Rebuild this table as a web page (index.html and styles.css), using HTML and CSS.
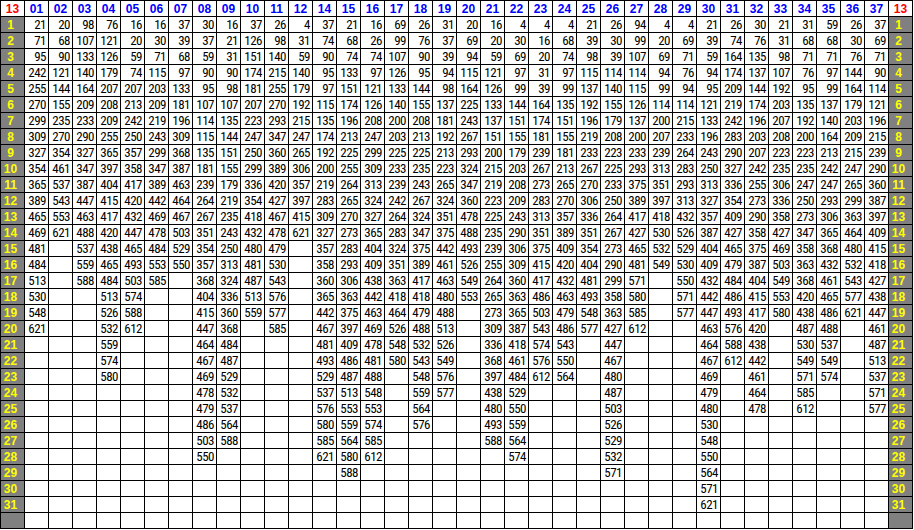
FILE: index.html
```html
<!DOCTYPE html>
<html>
<head>
<meta charset="utf-8">
<title>13</title>
<link rel="stylesheet" href="styles.css">
</head>
<body>
<table class="sheet">
<tr class="hdr"><th class="corner">13</th><th>01</th><th>02</th><th>03</th><th>04</th><th>05</th><th>06</th><th>07</th><th>08</th><th>09</th><th>10</th><th>11</th><th>12</th><th>14</th><th>15</th><th>16</th><th>17</th><th>18</th><th>19</th><th>20</th><th>21</th><th>22</th><th>23</th><th>24</th><th>25</th><th>26</th><th>27</th><th>28</th><th>29</th><th>30</th><th>31</th><th>32</th><th>33</th><th>34</th><th>35</th><th>36</th><th>37</th><th class="corner">13</th></tr>
<tr><th class="rh">1</th><td>21</td><td>20</td><td>98</td><td>76</td><td>16</td><td>16</td><td>37</td><td>30</td><td>16</td><td>37</td><td>26</td><td>4</td><td>37</td><td>21</td><td>16</td><td>69</td><td>26</td><td>31</td><td>20</td><td>16</td><td>4</td><td>4</td><td>4</td><td>21</td><td>26</td><td>94</td><td>4</td><td>4</td><td>21</td><td>26</td><td>30</td><td>21</td><td>31</td><td>59</td><td>26</td><td>37</td><th class="rh">1</th></tr>
<tr><th class="rh">2</th><td>71</td><td>68</td><td>107</td><td>121</td><td>20</td><td>30</td><td>39</td><td>37</td><td>21</td><td>126</td><td>98</td><td>31</td><td>74</td><td>68</td><td>26</td><td>99</td><td>76</td><td>37</td><td>69</td><td>20</td><td>30</td><td>16</td><td>68</td><td>39</td><td>30</td><td>99</td><td>20</td><td>69</td><td>39</td><td>74</td><td>76</td><td>31</td><td>68</td><td>68</td><td>30</td><td>69</td><th class="rh">2</th></tr>
<tr><th class="rh">3</th><td>95</td><td>90</td><td>133</td><td>126</td><td>59</td><td>71</td><td>68</td><td>59</td><td>31</td><td>151</td><td>140</td><td>59</td><td>90</td><td>74</td><td>74</td><td>107</td><td>90</td><td>39</td><td>94</td><td>59</td><td>69</td><td>20</td><td>74</td><td>98</td><td>39</td><td>107</td><td>69</td><td>71</td><td>59</td><td>164</td><td>135</td><td>98</td><td>71</td><td>71</td><td>76</td><td>71</td><th class="rh">3</th></tr>
<tr><th class="rh">4</th><td>242</td><td>121</td><td>140</td><td>179</td><td>74</td><td>115</td><td>97</td><td>90</td><td>90</td><td>174</td><td>215</td><td>140</td><td>95</td><td>133</td><td>97</td><td>126</td><td>95</td><td>94</td><td>115</td><td>121</td><td>97</td><td>31</td><td>97</td><td>115</td><td>114</td><td>114</td><td>94</td><td>76</td><td>94</td><td>174</td><td>137</td><td>107</td><td>76</td><td>97</td><td>144</td><td>90</td><th class="rh">4</th></tr>
<tr><th class="rh">5</th><td>255</td><td>144</td><td>164</td><td>207</td><td>207</td><td>203</td><td>133</td><td>95</td><td>98</td><td>181</td><td>255</td><td>179</td><td>97</td><td>151</td><td>121</td><td>133</td><td>144</td><td>98</td><td>164</td><td>126</td><td>99</td><td>39</td><td>99</td><td>137</td><td>140</td><td>115</td><td>99</td><td>94</td><td>95</td><td>209</td><td>144</td><td>192</td><td>95</td><td>99</td><td>164</td><td>114</td><th class="rh">5</th></tr>
<tr><th class="rh">6</th><td>270</td><td>155</td><td>209</td><td>208</td><td>213</td><td>209</td><td>181</td><td>107</td><td>107</td><td>207</td><td>270</td><td>192</td><td>115</td><td>174</td><td>126</td><td>140</td><td>155</td><td>137</td><td>225</td><td>133</td><td>144</td><td>164</td><td>135</td><td>192</td><td>155</td><td>126</td><td>114</td><td>114</td><td>121</td><td>219</td><td>174</td><td>203</td><td>135</td><td>137</td><td>179</td><td>121</td><th class="rh">6</th></tr>
<tr><th class="rh">7</th><td>299</td><td>235</td><td>233</td><td>209</td><td>242</td><td>219</td><td>196</td><td>114</td><td>135</td><td>223</td><td>293</td><td>215</td><td>135</td><td>196</td><td>208</td><td>200</td><td>208</td><td>181</td><td>243</td><td>137</td><td>151</td><td>174</td><td>151</td><td>196</td><td>179</td><td>137</td><td>200</td><td>215</td><td>133</td><td>242</td><td>196</td><td>207</td><td>192</td><td>140</td><td>203</td><td>196</td><th class="rh">7</th></tr>
<tr><th class="rh">8</th><td>309</td><td>270</td><td>290</td><td>255</td><td>250</td><td>243</td><td>309</td><td>115</td><td>144</td><td>247</td><td>347</td><td>247</td><td>174</td><td>213</td><td>247</td><td>203</td><td>213</td><td>192</td><td>267</td><td>151</td><td>155</td><td>181</td><td>155</td><td>219</td><td>208</td><td>200</td><td>207</td><td>233</td><td>196</td><td>283</td><td>203</td><td>208</td><td>200</td><td>164</td><td>209</td><td>215</td><th class="rh">8</th></tr>
<tr><th class="rh">9</th><td>327</td><td>354</td><td>327</td><td>365</td><td>357</td><td>299</td><td>368</td><td>135</td><td>151</td><td>250</td><td>360</td><td>265</td><td>192</td><td>225</td><td>299</td><td>225</td><td>225</td><td>213</td><td>293</td><td>200</td><td>179</td><td>239</td><td>181</td><td>233</td><td>223</td><td>233</td><td>239</td><td>264</td><td>243</td><td>290</td><td>207</td><td>223</td><td>223</td><td>213</td><td>215</td><td>239</td><th class="rh">9</th></tr>
<tr><th class="rh">10</th><td>354</td><td>461</td><td>347</td><td>397</td><td>358</td><td>347</td><td>387</td><td>181</td><td>155</td><td>299</td><td>389</td><td>306</td><td>200</td><td>255</td><td>309</td><td>233</td><td>235</td><td>223</td><td>324</td><td>215</td><td>203</td><td>267</td><td>213</td><td>267</td><td>225</td><td>293</td><td>313</td><td>283</td><td>250</td><td>327</td><td>242</td><td>235</td><td>235</td><td>242</td><td>247</td><td>290</td><th class="rh">10</th></tr>
<tr><th class="rh">11</th><td>365</td><td>537</td><td>387</td><td>404</td><td>417</td><td>389</td><td>463</td><td>239</td><td>179</td><td>336</td><td>420</td><td>357</td><td>219</td><td>264</td><td>313</td><td>239</td><td>243</td><td>265</td><td>347</td><td>219</td><td>208</td><td>273</td><td>265</td><td>270</td><td>233</td><td>375</td><td>351</td><td>293</td><td>313</td><td>336</td><td>255</td><td>306</td><td>247</td><td>247</td><td>265</td><td>360</td><th class="rh">11</th></tr>
<tr><th class="rh">12</th><td>389</td><td>543</td><td>447</td><td>415</td><td>420</td><td>442</td><td>464</td><td>264</td><td>219</td><td>354</td><td>427</td><td>397</td><td>283</td><td>265</td><td>324</td><td>242</td><td>267</td><td>324</td><td>360</td><td>223</td><td>209</td><td>283</td><td>270</td><td>306</td><td>250</td><td>389</td><td>397</td><td>313</td><td>327</td><td>354</td><td>273</td><td>336</td><td>250</td><td>293</td><td>299</td><td>387</td><th class="rh">12</th></tr>
<tr><th class="rh">13</th><td>465</td><td>553</td><td>463</td><td>417</td><td>432</td><td>469</td><td>467</td><td>267</td><td>235</td><td>418</td><td>467</td><td>415</td><td>309</td><td>270</td><td>327</td><td>264</td><td>324</td><td>351</td><td>478</td><td>225</td><td>243</td><td>313</td><td>357</td><td>336</td><td>264</td><td>417</td><td>418</td><td>432</td><td>357</td><td>409</td><td>290</td><td>358</td><td>273</td><td>306</td><td>363</td><td>397</td><th class="rh">13</th></tr>
<tr><th class="rh">14</th><td>469</td><td>621</td><td>488</td><td>420</td><td>447</td><td>478</td><td>503</td><td>351</td><td>243</td><td>432</td><td>478</td><td>621</td><td>327</td><td>273</td><td>365</td><td>283</td><td>347</td><td>375</td><td>488</td><td>235</td><td>290</td><td>351</td><td>389</td><td>351</td><td>267</td><td>427</td><td>530</td><td>526</td><td>387</td><td>427</td><td>358</td><td>427</td><td>347</td><td>365</td><td>464</td><td>409</td><th class="rh">14</th></tr>
<tr><th class="rh">15</th><td>481</td><td></td><td>537</td><td>438</td><td>465</td><td>484</td><td>529</td><td>354</td><td>250</td><td>480</td><td>479</td><td></td><td>357</td><td>283</td><td>404</td><td>324</td><td>375</td><td>442</td><td>493</td><td>239</td><td>306</td><td>375</td><td>409</td><td>354</td><td>273</td><td>465</td><td>532</td><td>529</td><td>404</td><td>465</td><td>375</td><td>469</td><td>358</td><td>368</td><td>480</td><td>415</td><th class="rh">15</th></tr>
<tr><th class="rh">16</th><td>484</td><td></td><td>559</td><td>465</td><td>493</td><td>553</td><td>550</td><td>357</td><td>313</td><td>481</td><td>530</td><td></td><td>358</td><td>293</td><td>409</td><td>351</td><td>389</td><td>461</td><td>526</td><td>255</td><td>309</td><td>415</td><td>420</td><td>404</td><td>290</td><td>481</td><td>549</td><td>530</td><td>409</td><td>479</td><td>387</td><td>503</td><td>363</td><td>432</td><td>532</td><td>418</td><th class="rh">16</th></tr>
<tr><th class="rh">17</th><td>513</td><td></td><td>588</td><td>484</td><td>503</td><td>585</td><td></td><td>368</td><td>324</td><td>487</td><td>543</td><td></td><td>360</td><td>306</td><td>438</td><td>363</td><td>417</td><td>463</td><td>549</td><td>264</td><td>360</td><td>417</td><td>432</td><td>481</td><td>299</td><td>571</td><td></td><td>550</td><td>432</td><td>484</td><td>404</td><td>549</td><td>368</td><td>461</td><td>543</td><td>427</td><th class="rh">17</th></tr>
<tr><th class="rh">18</th><td>530</td><td></td><td></td><td>513</td><td>574</td><td></td><td></td><td>404</td><td>336</td><td>513</td><td>576</td><td></td><td>365</td><td>363</td><td>442</td><td>418</td><td>418</td><td>480</td><td>553</td><td>265</td><td>363</td><td>486</td><td>463</td><td>493</td><td>358</td><td>580</td><td></td><td>571</td><td>442</td><td>486</td><td>415</td><td>553</td><td>420</td><td>465</td><td>577</td><td>438</td><th class="rh">18</th></tr>
<tr><th class="rh">19</th><td>548</td><td></td><td></td><td>526</td><td>588</td><td></td><td></td><td>415</td><td>360</td><td>559</td><td>577</td><td></td><td>442</td><td>375</td><td>463</td><td>464</td><td>479</td><td>488</td><td></td><td>273</td><td>365</td><td>503</td><td>479</td><td>548</td><td>363</td><td>585</td><td></td><td>577</td><td>447</td><td>493</td><td>417</td><td>580</td><td>438</td><td>486</td><td>621</td><td>447</td><th class="rh">19</th></tr>
<tr><th class="rh">20</th><td>621</td><td></td><td></td><td>532</td><td>612</td><td></td><td></td><td>447</td><td>368</td><td></td><td>585</td><td></td><td>467</td><td>397</td><td>469</td><td>526</td><td>488</td><td>513</td><td></td><td>309</td><td>387</td><td>543</td><td>486</td><td>577</td><td>427</td><td>612</td><td></td><td></td><td>463</td><td>576</td><td>420</td><td></td><td>487</td><td>488</td><td></td><td>461</td><th class="rh">20</th></tr>
<tr><th class="rh">21</th><td></td><td></td><td></td><td>559</td><td></td><td></td><td></td><td>464</td><td>484</td><td></td><td></td><td></td><td>481</td><td>409</td><td>478</td><td>548</td><td>532</td><td>526</td><td></td><td>336</td><td>418</td><td>574</td><td>543</td><td></td><td>447</td><td></td><td></td><td></td><td>464</td><td>588</td><td>438</td><td></td><td>530</td><td>537</td><td></td><td>487</td><th class="rh">21</th></tr>
<tr><th class="rh">22</th><td></td><td></td><td></td><td>574</td><td></td><td></td><td></td><td>467</td><td>487</td><td></td><td></td><td></td><td>493</td><td>486</td><td>481</td><td>580</td><td>543</td><td>549</td><td></td><td>368</td><td>461</td><td>576</td><td>550</td><td></td><td>467</td><td></td><td></td><td></td><td>467</td><td>612</td><td>442</td><td></td><td>549</td><td>549</td><td></td><td>513</td><th class="rh">22</th></tr>
<tr><th class="rh">23</th><td></td><td></td><td></td><td>580</td><td></td><td></td><td></td><td>469</td><td>529</td><td></td><td></td><td></td><td>529</td><td>487</td><td>488</td><td></td><td>548</td><td>576</td><td></td><td>397</td><td>484</td><td>612</td><td>564</td><td></td><td>480</td><td></td><td></td><td></td><td>469</td><td></td><td>461</td><td></td><td>571</td><td>574</td><td></td><td>537</td><th class="rh">23</th></tr>
<tr><th class="rh">24</th><td></td><td></td><td></td><td></td><td></td><td></td><td></td><td>478</td><td>532</td><td></td><td></td><td></td><td>537</td><td>513</td><td>548</td><td></td><td>559</td><td>577</td><td></td><td>438</td><td>529</td><td></td><td></td><td></td><td>487</td><td></td><td></td><td></td><td>479</td><td></td><td>464</td><td></td><td>585</td><td></td><td></td><td>571</td><th class="rh">24</th></tr>
<tr><th class="rh">25</th><td></td><td></td><td></td><td></td><td></td><td></td><td></td><td>479</td><td>537</td><td></td><td></td><td></td><td>576</td><td>553</td><td>553</td><td></td><td>564</td><td></td><td></td><td>480</td><td>550</td><td></td><td></td><td></td><td>503</td><td></td><td></td><td></td><td>480</td><td></td><td>478</td><td></td><td>612</td><td></td><td></td><td>577</td><th class="rh">25</th></tr>
<tr><th class="rh">26</th><td></td><td></td><td></td><td></td><td></td><td></td><td></td><td>486</td><td>564</td><td></td><td></td><td></td><td>580</td><td>559</td><td>574</td><td></td><td>576</td><td></td><td></td><td>493</td><td>559</td><td></td><td></td><td></td><td>526</td><td></td><td></td><td></td><td>530</td><td></td><td></td><td></td><td></td><td></td><td></td><td></td><th class="rh">26</th></tr>
<tr><th class="rh">27</th><td></td><td></td><td></td><td></td><td></td><td></td><td></td><td>503</td><td>588</td><td></td><td></td><td></td><td>585</td><td>564</td><td>585</td><td></td><td></td><td></td><td></td><td>588</td><td>564</td><td></td><td></td><td></td><td>529</td><td></td><td></td><td></td><td>548</td><td></td><td></td><td></td><td></td><td></td><td></td><td></td><th class="rh">27</th></tr>
<tr><th class="rh">28</th><td></td><td></td><td></td><td></td><td></td><td></td><td></td><td>550</td><td></td><td></td><td></td><td></td><td>621</td><td>580</td><td>612</td><td></td><td></td><td></td><td></td><td></td><td>574</td><td></td><td></td><td></td><td>532</td><td></td><td></td><td></td><td>550</td><td></td><td></td><td></td><td></td><td></td><td></td><td></td><th class="rh">28</th></tr>
<tr><th class="rh">29</th><td></td><td></td><td></td><td></td><td></td><td></td><td></td><td></td><td></td><td></td><td></td><td></td><td></td><td>588</td><td></td><td></td><td></td><td></td><td></td><td></td><td></td><td></td><td></td><td></td><td>571</td><td></td><td></td><td></td><td>564</td><td></td><td></td><td></td><td></td><td></td><td></td><td></td><th class="rh">29</th></tr>
<tr><th class="rh">30</th><td></td><td></td><td></td><td></td><td></td><td></td><td></td><td></td><td></td><td></td><td></td><td></td><td></td><td></td><td></td><td></td><td></td><td></td><td></td><td></td><td></td><td></td><td></td><td></td><td></td><td></td><td></td><td></td><td>571</td><td></td><td></td><td></td><td></td><td></td><td></td><td></td><th class="rh">30</th></tr>
<tr><th class="rh">31</th><td></td><td></td><td></td><td></td><td></td><td></td><td></td><td></td><td></td><td></td><td></td><td></td><td></td><td></td><td></td><td></td><td></td><td></td><td></td><td></td><td></td><td></td><td></td><td></td><td></td><td></td><td></td><td></td><td>621</td><td></td><td></td><td></td><td></td><td></td><td></td><td></td><th class="rh">31</th></tr>
<tr><th class="rh"></th><td></td><td></td><td></td><td></td><td></td><td></td><td></td><td></td><td></td><td></td><td></td><td></td><td></td><td></td><td></td><td></td><td></td><td></td><td></td><td></td><td></td><td></td><td></td><td></td><td></td><td></td><td></td><td></td><td></td><td></td><td></td><td></td><td></td><td></td><td></td><td></td><th class="rh"></th></tr>
</table>
</body>
</html>
```
FILE: styles.css
```css
html, body {
  margin: 0;
  padding: 0;
  background: #ffffff;
}

.sheet {
  width: 913px;
  border-collapse: collapse;
  table-layout: fixed;
}

.sheet td,
.sheet th {
  box-sizing: border-box;
  width: 24px;
  height: 16px;
  padding: 0;
  border: 1px solid #000000;
  overflow: hidden;
  white-space: nowrap;
  line-height: 14px;
}

.sheet td {
  font-family: Roboto, "Liberation Sans", sans-serif;
  font-stretch: 75%;
  font-size: 13px;
  letter-spacing: -0.5px;
  color: #000000;
  text-align: right;
  padding-right: 2px;
}

.hdr th {
  font-family: "Liberation Sans", Arial, sans-serif;
  font-weight: bold;
  font-size: 12px;
  color: #0000ff;
  background: #ffffff;
  text-align: center;
}

.hdr th.corner {
  color: #ff0000;
}

.sheet th.rh {
  font-family: "Liberation Sans", Arial, sans-serif;
  font-weight: bold;
  font-size: 12px;
  color: #ffff00;
  background: #808080;
  text-align: center;
  padding-right: 4px;
}
```
